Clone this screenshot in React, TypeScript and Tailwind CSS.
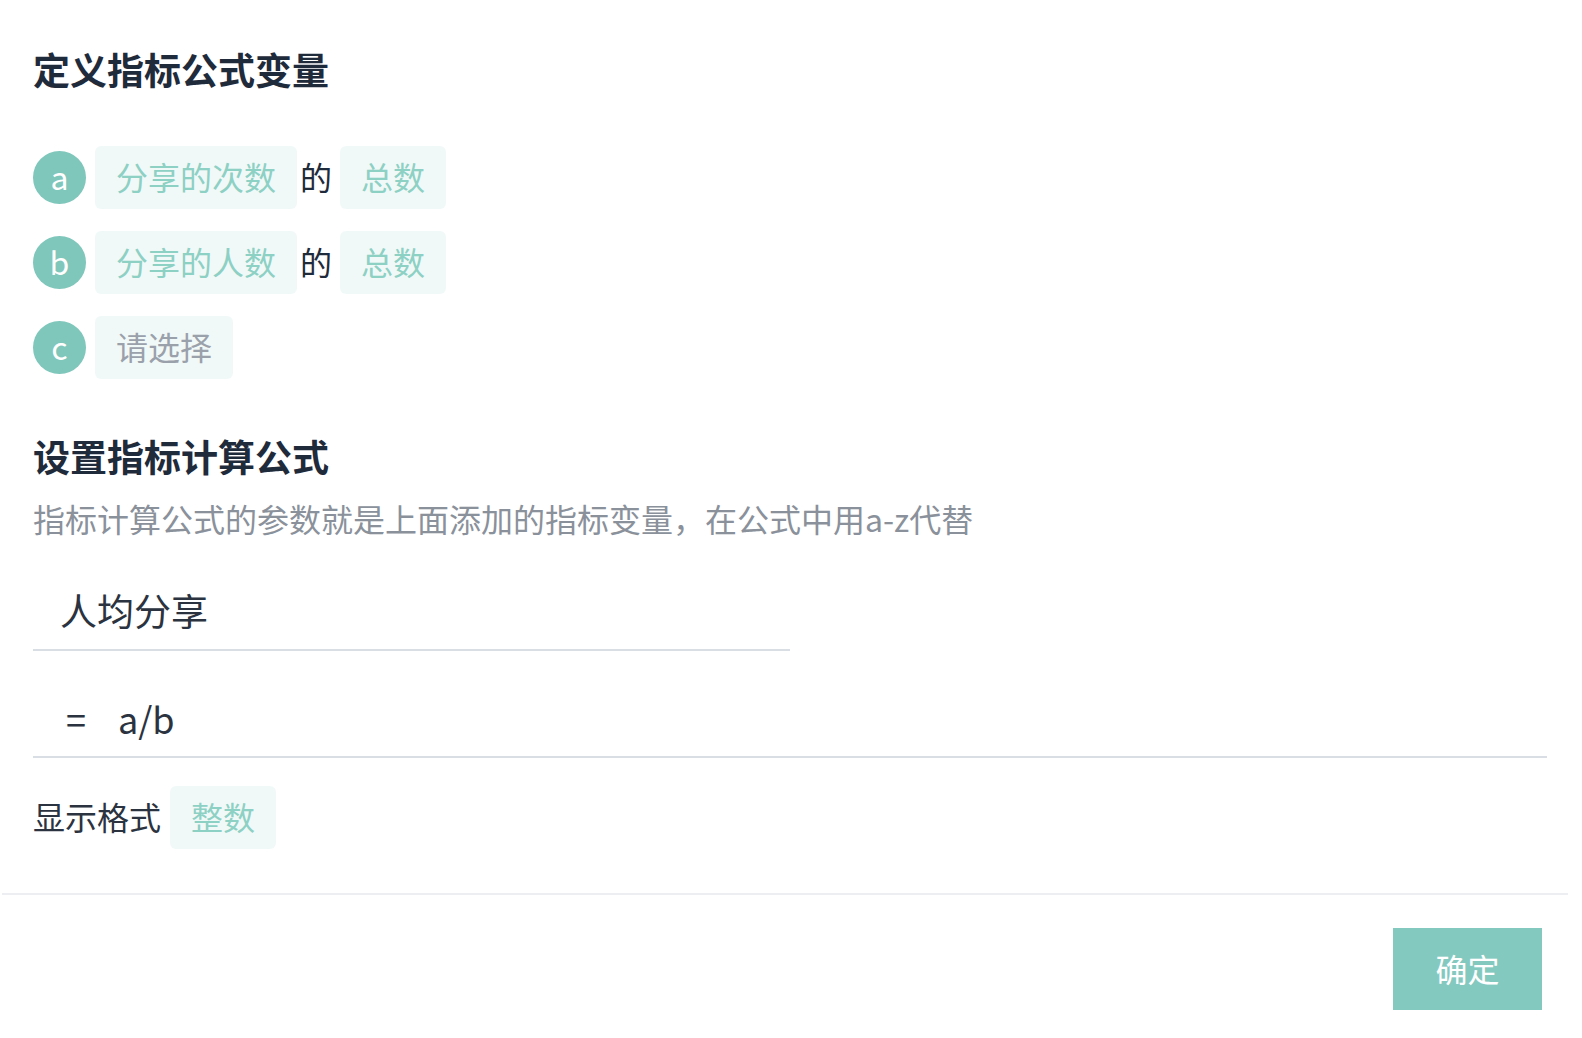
const font = { fontFamily: '"Noto Sans CJK SC", "Noto Sans", sans-serif' };

const Circle = ({ letter }: { letter: string }) => (
  <div className="w-[53px] h-[53px] rounded-full bg-[#7fc6bb] text-white text-[32px] leading-none flex items-center justify-center pb-[4px]">
    {letter}
  </div>
);

const Chip = ({ text, muted }: { text: string; muted?: boolean }) => (
  <div
    className={
      "h-[63px] px-[21px] pb-[3px] rounded-md bg-[#f1f9f8] text-[32px] flex items-center " +
      (muted ? "text-[#9aa1ab]" : "text-[#8dd0c4]")
    }
  >
    {text}
  </div>
);

export default function App() {
  const vars = [
    { letter: "a", field: "分享的次数", agg: "总数" },
    { letter: "b", field: "分享的人数", agg: "总数" },
    { letter: "c", field: "", agg: "" },
  ];

  return (
    <div className="min-h-screen bg-white" style={font}>
      <div className="pl-[33px] pr-[35px]">
        {/* 定义变量 */}
        <h2 className="pt-[51px] text-[37px] leading-[37px] font-bold text-[#1f2b3b]">
          定义指标公式变量
        </h2>

        <div className="mt-[58px] flex flex-col gap-[22px]">
          {vars.map((v) => (
            <div key={v.letter} className="flex items-center h-[63px]">
              <Circle letter={v.letter} />
              <div className="ml-[9px]">
                {v.field ? <Chip text={v.field} /> : <Chip text="请选择" muted />}
              </div>
              {v.agg && (
                <>
                  <span className="ml-[3px] mr-[8px] pb-[3px] text-[32px] text-[#1f2b3b]">的</span>
                  <Chip text={v.agg} />
                </>
              )}
            </div>
          ))}
        </div>

        {/* 计算公式 */}
        <h2 className="mt-[59px] text-[37px] leading-[37px] font-bold text-[#1f2b3b]">
          设置指标计算公式
        </h2>
        <p className="mt-[23px] text-[32px] leading-[40px] text-[#8a919b]">
          指标计算公式的参数就是上面添加的指标变量，在公式中用a-z代替
        </p>

        <div className="mt-[54px] w-[757px] pl-[27px] pb-[21px] border-b-2 border-[#d9dee4] text-[37px] leading-[36px] text-[#2b3340]">
          人均分享
        </div>

        <div className="mt-[49px] pl-[33px] pb-[20px] border-b-2 border-[#d9dee4] text-[36px] leading-[36px] text-[#2b3340] flex">
          <span>=</span>
          <span className="ml-[32px]">a/b</span>
        </div>

        <div className="mt-[28px] flex items-center">
          <span className="text-[32px] text-[#2b3340] mr-[9px] pb-[3px]">显示格式</span>
          <Chip text="整数" />
        </div>
      </div>

      <div className="mt-[44px] ml-[2px] mr-[14px] h-[2px] bg-[#eceef1]" />

      <div className="flex justify-end mt-[33px] mr-[40px]">
        <button className="w-[149px] h-[82px] pb-[3px] bg-[#84c9bf] text-white text-[32px] flex items-center justify-center">
          确定
        </button>
      </div>
    </div>
  );
}
